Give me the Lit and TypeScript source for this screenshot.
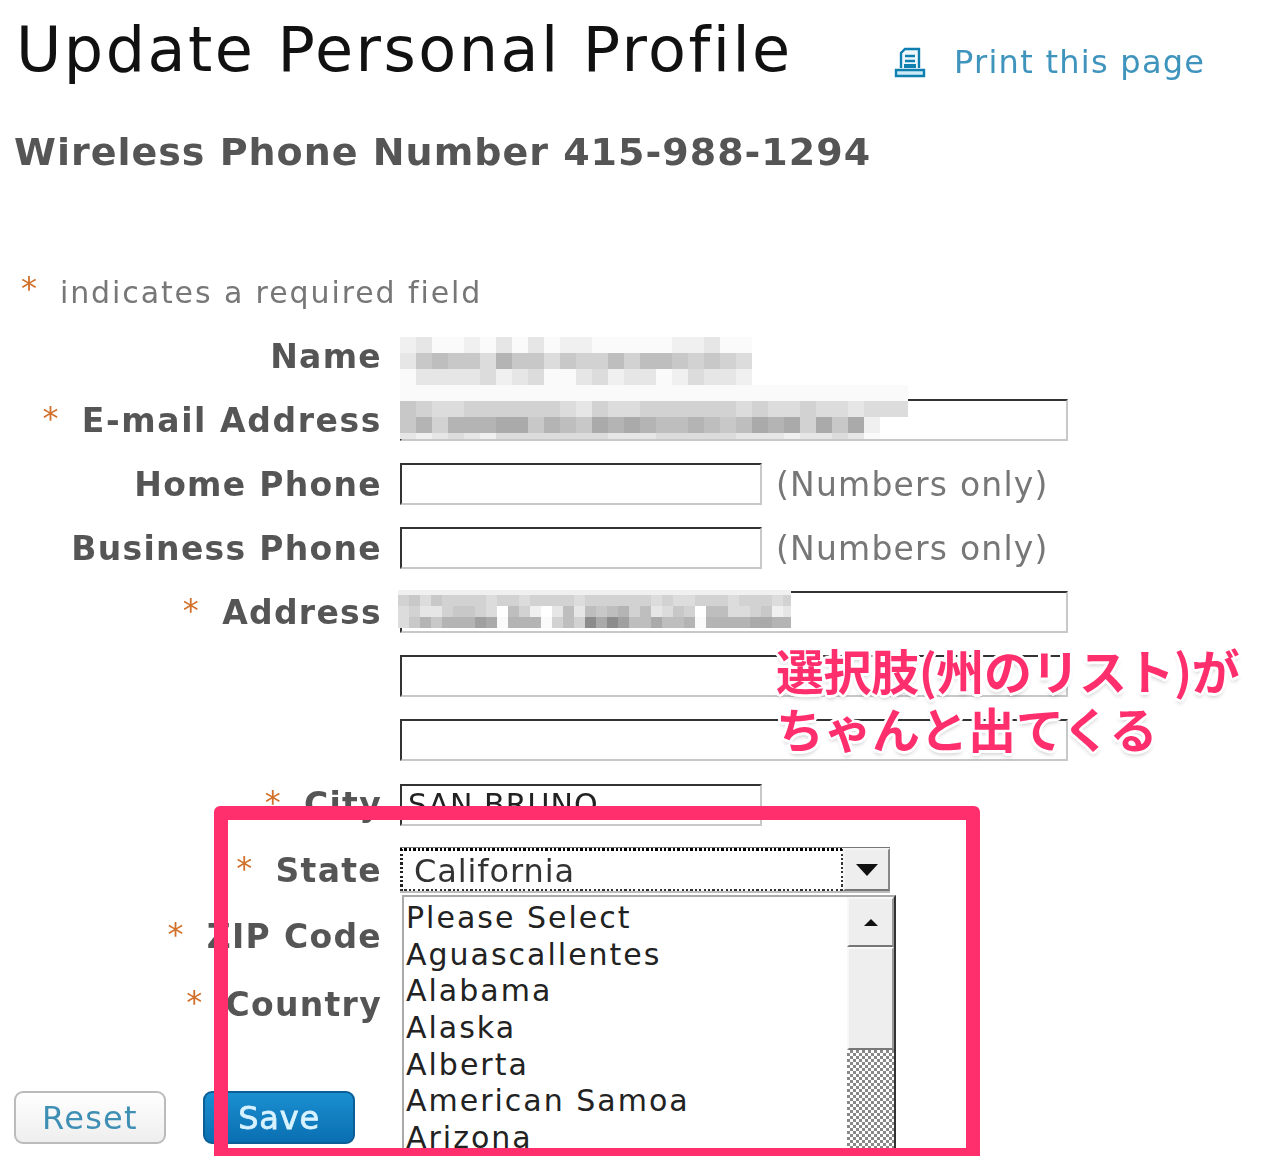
import { LitElement, html, css } from "lit";
import { customElement } from "lit/decorators.js";

const STATES = ["Please Select", "Aguascallentes", "Alabama", "Alaska", "Alberta", "American Samoa", "Arizona"];

// grey levels of the blurred-out personal data, one string per band: a = light ... m = dark, z = white
const NAME_MOSAIC = [
  "bcaabacacabbaaaaabbcaa",
  "cfgffdhffdfeegeggfefed",
  "accccdbcdaacdbccabdccb",
];
const EMAIL_MOSAIC = [
  "aaaaaaaaaaaaaaaaaaaaaaaaaaaaaaaa",
  "feddeeeeeedceddeeeeeededdeddcddd",
  "fhehhhiifhgfihihgghgfgihieifibzz",
  "cbcdcbdddddddcccdddddcccbccdcazz",
];
const ADDRESS_MOSAIC = [
  "bbbbbbbbbbbbbbbbbbbbbbbbbbbbbbbbbbbb",
  "efdfeeeedeedeeeedeeeeeededdeeedeeede",
  "decceffedzgebzcgcgfghegcdfezggddefbc",
  "dfhfhhhjiahhhaegeliljggigghahhhhiihh",
];

const shade = (c: string) => {
  const v = c === "z" ? 255 : 250 - (c.charCodeAt(0) - 97) * 10;
  return `rgb(${v},${v},${v})`;
};

@customElement("app-root")
export class AppRoot extends LitElement {
  static styles = css`
    :host {
      display: block;
      position: relative;
      width: 1280px;
      height: 1156px;
      overflow: hidden;
      background: #fff;
      font-family: "DejaVu Sans", Verdana, sans-serif;
    }

    .page {
      height: 1156px;
      overflow: hidden;
      filter: blur(0.6px);
    }

    .head {
      display: flex;
      align-items: flex-start;
      height: 125px;
      padding-left: 16px;
    }

    h1 {
      margin: 0;
      width: 878px;
      padding-top: 11px;
      font-size: 62px;
      line-height: 78px;
      font-weight: 400;
      letter-spacing: 2.45px;
      color: #111;
      white-space: nowrap;
    }

    .print {
      display: flex;
      align-items: center;
      gap: 28px;
      padding-top: 42px;
      font-size: 32px;
      line-height: 40px;
      letter-spacing: 1.27px;
      color: #3f94bd;
      white-space: nowrap;
    }

    .print svg {
      width: 32px;
      height: 32px;
      flex: none;
    }

    h2 {
      margin: 0;
      height: 136px;
      padding: 1px 0 1px 14px;
      font-size: 38px;
      line-height: 52px;
      font-weight: 700;
      letter-spacing: 1px;
      color: #555;
      white-space: nowrap;
    }

    .legend {
      display: flex;
      align-items: center;
      height: 59px;
      padding: 0 0 2px 21px;
      gap: 21px;
      font-size: 30px;
      letter-spacing: 1.9px;
      color: #777;
    }

    .star {
      color: #d2702a;
      font-size: 32px;
      font-weight: 400;
      position: relative;
      top: -2px;
    }

    .legend .star {
      top: -5px;
    }

    .row {
      display: grid;
      grid-template-columns: 380px auto 1fr;
      column-gap: 18px;
      align-items: center;
      height: 64px;
    }

    .row.city {
      height: 65px;
    }

    .row.state {
      height: 66px;
    }

    .row.zip {
      height: 66px;
    }

    .row.country {
      height: 70px;
    }

    .label {
      display: flex;
      justify-content: flex-end;
      gap: 22px;
      margin-right: -2px;
      font-size: 33px;
      font-weight: 700;
      letter-spacing: 1.3px;
      color: #555;
      white-space: nowrap;
    }

    .label.wide span:last-child {
      letter-spacing: 1.6px;
    }

    .field {
      display: block;
      box-sizing: border-box;
      height: 42px;
      margin-left: 2px;
      padding: 0 6px;
      border: 2px solid;
      border-color: #333 #c8c8c8 #c8c8c8 #333;
      background: #fff;
      font: 400 30px "DejaVu Sans", sans-serif;
      letter-spacing: 1px;
      color: #222;
      outline: none;
    }

    .field.short {
      width: 362px;
    }

    .field.long {
      width: 668px;
    }

    .hint {
      margin-left: -4px;
      font-size: 33px;
      letter-spacing: 1.2px;
      color: #777;
      white-space: nowrap;
    }

    .select-wrap {
      position: relative;
      margin-left: 2px;
      width: 490px;
      height: 46px;
    }

    .select {
      display: flex;
      box-sizing: border-box;
      height: 46px;
      border-top: 1px solid #777;
      border-bottom: 2px solid #bbb;
    }

    /* focus rectangle, the dots are wider than a dotted border so they survive the blur */
    .select-value {
      flex: 1;
      box-sizing: border-box;
      padding-left: 14px;
      background:
        repeating-linear-gradient(90deg, #000 0 2.4px, transparent 2.4px 4.4px) top / 100% 3px no-repeat,
        repeating-linear-gradient(90deg, #333 0 2.2px, transparent 2.2px 4.4px) bottom / 100% 2px no-repeat,
        repeating-linear-gradient(0deg, #222 0 2.2px, transparent 2.2px 4.4px) left / 3px 100% no-repeat,
        repeating-linear-gradient(0deg, #333 0 2.2px, transparent 2.2px 4.4px) right / 2px 100% no-repeat;
      font-size: 32px;
      line-height: 46px;
      letter-spacing: 0.9px;
      color: #333;
    }

    .select-btn {
      display: flex;
      align-items: center;
      justify-content: center;
      box-sizing: border-box;
      width: 47px;
      border: 2px solid;
      border-color: #f4f4f4 #888 #777 #f4f4f4;
      background: #eee;
    }

    .select-btn i {
      border: 11px solid transparent;
      border-top: 12px solid #111;
      border-bottom: 0;
    }

    /* open dropdown of the state select, lies over the rows below */
    .list {
      position: absolute;
      top: 48px;
      left: 2px;
      width: 494px;
      height: 290px;
      box-sizing: border-box;
      display: flex;
      border: 2px solid;
      border-color: #aaa #333 #333 #aaa;
      background: #fff;
      z-index: 1;
    }

    .options {
      flex: 1;
      padding: 2px 0 0 2px;
    }

    .option {
      height: 36.7px;
      font-size: 30px;
      line-height: 38px;
      letter-spacing: 2px;
      color: #222;
      white-space: nowrap;
    }

    .scrollbar {
      display: flex;
      flex-direction: column;
      width: 47px;
    }

    .scroll-btn {
      display: flex;
      align-items: center;
      justify-content: center;
      box-sizing: border-box;
      height: 50px;
      border: 2px solid;
      border-color: #f8f8f8 #999 #777 #f8f8f8;
      background: #eee;
    }

    .scroll-btn i {
      border: 7px solid transparent;
      border-bottom: 7px solid #111;
      border-top: 0;
    }

    .thumb {
      box-sizing: border-box;
      height: 103px;
      border: 2px solid;
      border-color: #f8f8f8 #999 #777 #f8f8f8;
      background: #eee;
    }

    .track {
      flex: 1;
      background: repeating-conic-gradient(#888 0 25%, #fff 0 50%) 0 0 / 6px 6px;
    }

    .buttons {
      display: flex;
      gap: 37px;
      margin-top: 52px;
      padding-left: 14px;
    }

    .btn {
      box-sizing: border-box;
      display: flex;
      align-items: center;
      justify-content: center;
      width: 152px;
      height: 53px;
      border-radius: 9px;
      font-size: 32px;
      letter-spacing: 0.8px;
    }

    .btn.reset {
      border: 2px solid #bbb;
      background: linear-gradient(#fff, #eee);
      color: #3f8fb5;
      letter-spacing: 1.3px;
    }

    .btn.save {
      border: 2px solid #0c5f96;
      background: linear-gradient(#1a8fd0, #0a6fb2);
      color: #d8f2ff;
      font-weight: 400;
      -webkit-text-stroke: 0.8px #d8f2ff;
    }

    .mosaic {
      position: absolute;
      overflow: hidden;
      filter: blur(0.5px);
    }

    .mosaic div {
      display: flex;
    }

    .mosaic span {
      flex: none;
    }

    .mosaic.name {
      left: 400px;
      top: 337px;
      width: 352px;
      height: 48px;
    }

    .mosaic.name div,
    .mosaic.name span,
    .mosaic.email div,
    .mosaic.email span {
      height: 16px;
    }

    .mosaic.name span,
    .mosaic.email span {
      width: 16px;
    }

    .mosaic.email {
      left: 400px;
      top: 385px;
      width: 508px;
      height: 54px;
    }

    .mosaic.address {
      left: 398px;
      top: 590px;
      width: 393px;
      height: 39px;
    }

    .mosaic.address div,
    .mosaic.address span {
      height: 11px;
    }

    .mosaic.address div:first-child,
    .mosaic.address div:first-child span {
      height: 5px;
    }

    .mosaic.address span {
      width: 11px;
    }

    .frame {
      position: absolute;
      left: 214px;
      top: 806px;
      width: 766px;
      height: 356px;
      box-sizing: border-box;
      border: 14px solid #ff2f6e;
      border-radius: 6px;
    }

    .note {
      position: absolute;
      left: 776px;
      top: 640px;
      font-family: "Noto Sans CJK JP", sans-serif;
      font-size: 48px;
      line-height: 58px;
      font-weight: 700;
      color: #ff2f6e;
      white-space: nowrap;
      text-shadow: 3px 0 0 #fff, -3px 0 0 #fff, 0 3px 0 #fff, 0 -3px 0 #fff, 2px 2px 0 #fff, -2px 2px 0 #fff,
        2px -2px 0 #fff, -2px -2px 0 #fff, 0 4px 4px rgba(0, 0, 0, 0.22);
    }

    .note .tight {
      letter-spacing: -0.45px;
    }
  `;

  private mosaic(cls: string, bands: string[]) {
    return html`<div class="mosaic ${cls}">
      ${bands.map(
        (b) => html`<div>${[...b].map((c) => html`<span style="background:${shade(c)}"></span>`)}</div>`
      )}
    </div>`;
  }

  private label(text: string, required = false, wide = false) {
    return html`<div class="label ${wide ? "wide" : ""}">
      ${required ? html`<span class="star">*</span>` : ""}<span>${text}</span>
    </div>`;
  }

  render() {
    return html`
      <div class="page">
        <div class="head">
          <h1>Update Personal Profile</h1>
          <div class="print">
            <svg viewBox="0 0 32 32" fill="none" stroke="#0f7fb0" stroke-width="2.4">
              <path d="M7 22V7l4-4h14v19" fill="#eef8fc" />
              <path d="M11 10h10M11 15h10" />
              <path d="M10 20h12" stroke-width="4" />
              <path d="M2 24h28v6H2z" fill="#cdeaf6" />
            </svg>
            <span>Print this page</span>
          </div>
        </div>
        <h2>Wireless Phone Number 415-988-1294</h2>
        <div class="legend"><span class="star">*</span><span>indicates a required field</span></div>

        <div class="row">${this.label("Name")}</div>
        <div class="row">${this.label("E-mail Address", true, true)}<input class="field long" /></div>
        <div class="row">${this.label("Home Phone")}<input class="field short" /><span class="hint">(Numbers only)</span></div>
        <div class="row">${this.label("Business Phone")}<input class="field short" /><span class="hint">(Numbers only)</span></div>
        <div class="row">${this.label("Address", true)}<input class="field long" /></div>
        <div class="row"><span></span><input class="field long" /></div>
        <div class="row"><span></span><input class="field long" /></div>
        <div class="row city">${this.label("City", true)}<input class="field short" value="SAN BRUNO" /></div>
        <div class="row state">
          ${this.label("State", true)}
          <div class="select-wrap">
            <div class="select">
              <div class="select-value">California</div>
              <div class="select-btn"><i></i></div>
            </div>
            <div class="list">
              <div class="options">${STATES.map((s) => html`<div class="option">${s}</div>`)}</div>
              <div class="scrollbar">
                <div class="scroll-btn"><i></i></div>
                <div class="thumb"></div>
                <div class="track"></div>
              </div>
            </div>
          </div>
        </div>
        <div class="row zip">${this.label("ZIP Code", true)}</div>
        <div class="row country">${this.label("Country", true)}</div>
        <div class="buttons">
          <div class="btn reset">Reset</div>
          <div class="btn save">Save</div>
        </div>
      </div>
      ${this.mosaic("name", NAME_MOSAIC)} ${this.mosaic("email", EMAIL_MOSAIC)} ${this.mosaic("address", ADDRESS_MOSAIC)}
      <div class="frame"></div>
      <div class="note"><span class="tight">選択肢(州のリスト)が</span><br />ちゃんと出てくる</div>
    `;
  }
}
